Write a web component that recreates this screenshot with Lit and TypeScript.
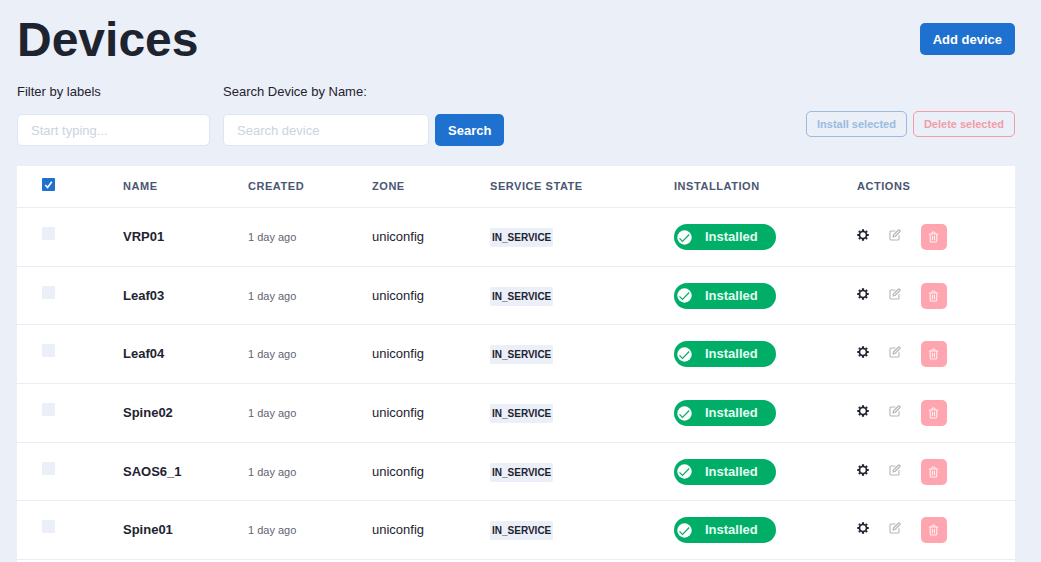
import { LitElement, html, css } from "lit";
import { customElement, property, state } from "lit/decorators.js";

interface Device {
  name: string;
  created: string;
  zone: string;
  state: string;
}

const DEVICES: Device[] = ["VRP01", "Leaf03", "Leaf04", "Spine02", "SAOS6_1", "Spine01"].map((name) => ({
  name,
  created: "1 day ago",
  zone: "uniconfig",
  state: "IN_SERVICE",
}));

const gearIcon = html`<svg viewBox="0 0 24 24" width="12" height="12" aria-hidden="true">
  <g fill="none" stroke="currentColor">
    <circle cx="12" cy="12" r="7" stroke-width="3.400" />
    <path
      stroke-width="4.400"
      d="M12 .5v4M12 19.500v4M.5 12h4M19.500 12h4M3.900 3.900l2.300 2.300M17.800 17.800l2.300 2.300M3.900 20.100l2.300-2.300M17.800 6.200l2.300-2.300"
    />
  </g>
</svg>`;

const editIcon = html`<svg viewBox="0 0 24 24" width="12" height="12" aria-hidden="true">
  <g fill="none" stroke="currentColor" stroke-width="2.200" stroke-linecap="round" stroke-linejoin="round">
    <path d="M12 4H4a2 2 0 0 0-2 2v14a2 2 0 0 0 2 2h14a2 2 0 0 0 2-2v-7" />
    <path d="M18.500 2.500a2.100 2.100 0 0 1 3 3L12 15l-4 1 1-4z" />
  </g>
</svg>`;

const trashIcon = html`<svg viewBox="0 0 24 24" width="12" height="12" aria-hidden="true">
  <g fill="none" stroke="currentColor" stroke-width="2.200" stroke-linecap="round" stroke-linejoin="round">
    <path d="M2.500 6h17M4.500 6v14a2 2 0 0 0 2 2h9a2 2 0 0 0 2-2V6M8 6V4a2 2 0 0 1 2-2h2a2 2 0 0 1 2 2v2" />
    <path d="M9 10.500v7M13 10.500v7" />
  </g>
</svg>`;

const checkIcon = html`<svg viewBox="0 0 15 15" width="15" height="15" aria-hidden="true">
  <circle cx="7.500" cy="7.500" r="7.200" fill="#fff" />
  <path d="M2.500 8.300l3 3 6.700-6.800" fill="none" stroke="#00ae68" stroke-width="1.200" />
</svg>`;

@customElement("install-switch")
export class InstallSwitch extends LitElement {
  static styles = css`
    :host {
      display: block;
    }
    .pill {
      display: flex;
      align-items: center;
      gap: 13px;
      width: 102px;
      height: 26px;
      padding: 0 3px;
      border: 0;
      border-radius: 13px;
      background: #00ae68;
      color: #e3fbf0;
      font: bold 13px/20px "Liberation Sans", Arial, sans-serif;
    }
    svg {
      flex: none;
    }
  `;

  render() {
    return html`<button class="pill" type="button" aria-pressed="true">${checkIcon}<span>Installed</span></button>`;
  }
}

@customElement("device-actions")
export class DeviceActions extends LitElement {
  @property() device = "";

  static styles = css`
    :host {
      display: flex;
      align-items: center;
      gap: 20px;
    }
    .action {
      display: flex;
      align-items: center;
      justify-content: center;
      width: 12px;
      height: 26px;
      padding: 0 0 4px;
      border: 0;
      background: none;
      color: #1e2330;
    }
    .edit {
      color: #b4b6ba;
    }
    .delete {
      width: 26px;
      padding: 0;
      border-radius: 5px;
      background: #ffa5b0;
      color: #fff0f2;
    }
  `;

  render() {
    return html`
      <button class="action" type="button" aria-label="Configure ${this.device}">${gearIcon}</button>
      <button class="action edit" type="button" aria-label="Edit ${this.device}" disabled>${editIcon}</button>
      <button class="action delete" type="button" aria-label="Delete ${this.device}" disabled>${trashIcon}</button>
    `;
  }
}

@customElement("app-root")
export class AppRoot extends LitElement {
  @state() private devices = DEVICES;

  static styles = css`
    :host {
      display: flex;
      flex-direction: column;
      box-sizing: border-box;
      min-height: 100vh;
      padding: 9px 26px 0 17px;
      background: #ebeff7;
      color: #1e2330;
      font: 13px/20px "Liberation Sans", Arial, sans-serif;
    }
    * {
      box-sizing: border-box;
    }
    .header {
      display: flex;
      align-items: center;
      justify-content: space-between;
      margin-bottom: 13px;
    }
    h1 {
      margin: 0;
      padding-top: 2px;
      font-size: 48px;
      line-height: 58px;
    }
    .toolbar {
      display: flex;
      align-items: flex-end;
      gap: 13px;
      margin-bottom: 20px;
    }
    .field label {
      display: block;
      margin-bottom: 12px;
    }
    .row,
    .bulk {
      display: flex;
      gap: 6px;
    }
    .bulk {
      margin: 0 0 9px auto;
    }
    .input {
      width: 206px;
      height: 32px;
      padding: 0 13px;
      border: 1px solid #dfe5f0;
      border-radius: 5px;
      background: #fff;
      color: inherit;
      font: inherit;
    }
    .labels {
      width: 193px;
    }
    .input::placeholder {
      color: #ccd3e0;
      opacity: 1;
    }
    .button {
      height: 32px;
      padding: 1px 13px 0;
      border: 0;
      border-radius: 5px;
      background: #1f71cf;
      color: #fff;
      font: bold 13px/20px "Liberation Sans", Arial, sans-serif;
    }
    .outline {
      height: 26px;
      padding: 0 10px;
      border: 1px solid #9abbe0;
      background: none;
      color: #9abbe0;
      font-size: 11px;
    }
    .danger {
      border-color: #f19ca7;
      color: #f19ca7;
    }
    .card {
      flex: 1;
      background: #fff;
    }
    table {
      width: 100%;
      table-layout: fixed;
      border-collapse: separate;
      border-spacing: 0;
    }
    .c-check {
      width: 87px;
    }
    .c-name {
      width: 125px;
    }
    .c-created {
      width: 124px;
    }
    .c-zone {
      width: 118px;
    }
    .c-state {
      width: 184px;
    }
    .c-install {
      width: 183px;
    }
    .c-actions {
      width: 177px;
    }
    th,
    td {
      padding: 0 0 0 19px;
      border-bottom: 1px solid #e9edf5;
      text-align: left;
      vertical-align: middle;
    }
    th {
      height: 42px;
      padding-bottom: 2px;
      color: #4a5672;
      font-size: 11px;
      letter-spacing: 0.05em;
    }
    td {
      height: 59px;
    }
    tr:nth-child(3n + 2) td {
      height: 58px;
    }
    th.select {
      padding: 0 0 4px 25px;
    }
    td.select {
      padding: 0 0 7px 25px;
    }
    .box {
      display: block;
      appearance: none;
      width: 13px;
      height: 13px;
      margin: 0;
      border-radius: 1px;
      background: #ebeff7;
    }
    .box:checked {
      background: #1f71cf
        url("data:image/svg+xml,%3Csvg xmlns='http://www.w3.org/2000/svg' viewBox='0 0 13 13'%3E%3Cpath d='M3.300 7l2.300 2.500 4.200-5.800' fill='none' stroke='white' stroke-width='1.600'/%3E%3C/svg%3E");
    }
    .name {
      font-weight: bold;
    }
    .created {
      color: #5f6470;
      font-size: 11px;
    }
    .badge {
      display: inline-block;
      padding: 0 2px;
      border-radius: 2px;
      background: #ebeff7;
      font-size: 10px;
      font-weight: bold;
      line-height: 19px;
      vertical-align: middle;
    }
  `;

  private row(d: Device) {
    return html`<tr>
      <td class="select"><input class="box" type="checkbox" aria-label="Select ${d.name}" /></td>
      <td class="name">${d.name}</td>
      <td class="created">${d.created}</td>
      <td>${d.zone}</td>
      <td><span class="badge">${d.state}</span></td>
      <td><install-switch></install-switch></td>
      <td><device-actions .device=${d.name}></device-actions></td>
    </tr>`;
  }

  render() {
    return html`
      <header class="header">
        <h1>Devices</h1>
        <button class="button" type="button">Add device</button>
      </header>
      <form class="toolbar">
        <div class="field">
          <label for="labels">Filter by labels</label>
          <div class="row"><input id="labels" class="input labels" type="text" placeholder="Start typing..." /></div>
        </div>
        <div class="field">
          <label for="search">Search Device by Name:</label>
          <div class="row">
            <input id="search" class="input" type="text" placeholder="Search device" />
            <button class="button" type="button">Search</button>
          </div>
        </div>
        <div class="bulk">
          <button class="button outline" type="button" disabled>Install selected</button>
          <button class="button outline danger" type="button" disabled>Delete selected</button>
        </div>
      </form>
      <main class="card">
        <table>
          <colgroup>
            <col class="c-check" />
            <col class="c-name" />
            <col class="c-created" />
            <col class="c-zone" />
            <col class="c-state" />
            <col class="c-install" />
            <col class="c-actions" />
          </colgroup>
          <thead>
            <tr>
              <th class="select"><input class="box" type="checkbox" aria-label="Select all devices" checked /></th>
              <th>NAME</th>
              <th>CREATED</th>
              <th>ZONE</th>
              <th>SERVICE STATE</th>
              <th>INSTALLATION</th>
              <th>ACTIONS</th>
            </tr>
          </thead>
          <tbody>
            ${this.devices.map((d) => this.row(d))}
          </tbody>
        </table>
      </main>
    `;
  }
}
